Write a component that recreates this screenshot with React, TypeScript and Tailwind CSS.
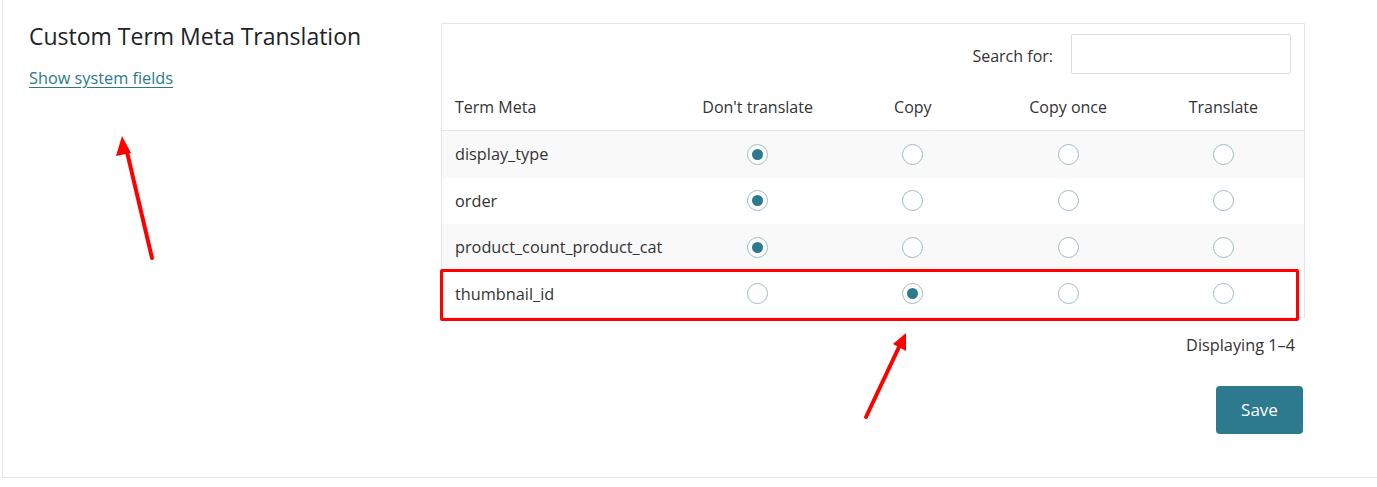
import type { JSX } from "react";

const rows: { name: string; value: number }[] = [
    { name: "display_type", value: 0 },
    { name: "order", value: 0 },
    { name: "product_count_product_cat", value: 0 },
    { name: "thumbnail_id", value: 1 },
];

const columns = ["Don't translate", "Copy", "Copy once", "Translate"];

function Radio({ checked }: { checked: boolean }): JSX.Element {
    return (
        <span className="w-[21px] h-[21px] rounded-full border-[1.5px] border-[#9fbcc3] bg-white flex items-center justify-center">
            {checked && <span className="w-[11px] h-[11px] rounded-full bg-[#2d7a8e]"></span>}
        </span>
    );
}

export default function App(): JSX.Element {
    return (
        <div className="relative w-[1377px] h-[487px] bg-white text-[#333] pl-[2px]" style={{ fontFamily: '"Open Sans", "Noto Sans", sans-serif' }}>
            <div className="h-[478px] border-l border-b border-[#e6e6e6] flex flex-row">
                <div className="w-[438px] pl-[26px] pt-[19px] shrink-0">
                    <h1 className="text-[23px] leading-[34px] text-[#1d2327]">Custom Term Meta Translation</h1>
                    <a className="block mt-[13px] text-[16.3px] leading-[24px] text-[#2b7a8b] underline underline-offset-[3px]">Show system fields</a>
                </div>

                <div className="pt-[23px] w-[864px] flex flex-col">
                    <div className="border border-[#e6e6e6] bg-white">
                        <div className="flex flex-row justify-end items-center pt-[10px] pr-[13px] gap-[18px]">
                            <span className="text-[16px] pt-[3px]">Search for:</span>
                            <div className="w-[220px] h-[40px] border border-[#dcdcdc] rounded-[2px] bg-white"></div>
                        </div>
                        <div className="grid grid-cols-[238px_repeat(4,1fr)] h-[57px] items-center pt-[10px] pr-[3px] border-b border-[#e6e6e6] text-[16px]">
                            <span className="pl-[13px]">Term Meta</span>
                            {columns.map((c) => (
                                <span key={c} className="text-center">{c}</span>
                            ))}
                        </div>
                        {rows.map((r, i) => (
                            <div key={r.name} className={`relative grid grid-cols-[238px_repeat(4,1fr)] h-[46.5px] items-center pr-[3px] text-[16.3px] ${i % 2 === 0 ? "bg-[#f9f9f9]" : "bg-white"}`}>
                                <span className="pl-[13px]">{r.name}</span>
                                {columns.map((c, j) => (
                                    <span key={c} className="flex justify-center">
                                        <Radio checked={r.value === j} />
                                    </span>
                                ))}
                                {i === 3 && (
                                    <div className="absolute -top-[2px] -bottom-[4px] -left-[2px] right-[5px] border-[3px] border-[#ff0000] rounded-[2px]"></div>
                                )}
                            </div>
                        ))}
                    </div>
                    <div className="flex flex-col items-end pr-[2px]">
                        <span className="mt-[15px] pr-[8px] text-[16.3px] leading-[24px]">Displaying 1–4</span>
                        <button className="mt-[29px] w-[87px] h-[48px] rounded-[4px] bg-[#2d7a8e] text-white text-[17px]">Save</button>
                    </div>
                </div>
            </div>

            <svg className="absolute inset-0 pointer-events-none" width="1377" height="487">
                <line x1="152" y1="258" x2="127" y2="152" stroke="#ff0000" strokeWidth="4" strokeLinecap="round" />
                <polygon points="122,136 116,156 131,153" fill="#ff0000" />
                <line x1="866" y1="417" x2="899" y2="347" stroke="#ff0000" strokeWidth="4" strokeLinecap="round" />
                <polygon points="906,333 893,344 906,351" fill="#ff0000" />
            </svg>
        </div>
    );
}
